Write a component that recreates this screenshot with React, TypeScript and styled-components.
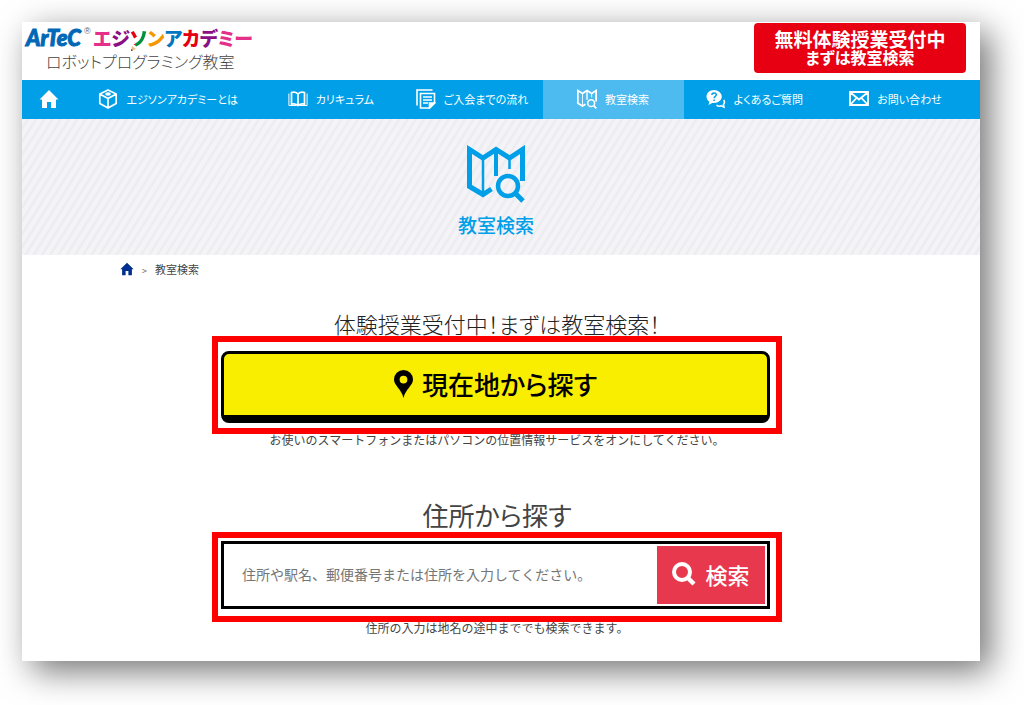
import React from "react";
import styled, { createGlobalStyle } from "styled-components";

const sans = `"Noto Sans CJK JP", "Noto Sans", sans-serif`;
const blue = "#009fe8";

const GlobalStyle = createGlobalStyle`
  *, *::before, *::after { box-sizing: border-box; }
  body {
    margin: 0;
    background: #fff;
    color: #444;
    font-family: ${sans};
    font-feature-settings: "palt";
  }
  a { color: inherit; text-decoration: none; }
  h1, h2, p, ol { margin: 0; padding: 0; font-weight: 400; }
  svg { display: block; flex: none; }
`;

const Stage = styled.div`
  padding: 22px 44px 44px 22px;
`;

const Page = styled.div`
  background: #fff;
  box-shadow: 10px 10px 32px rgba(0, 0, 0, 0.55);
`;

const Header = styled.header`
  display: flex;
  justify-content: space-between;
  align-items: flex-start;
  height: 58px;
  padding-right: 14px;
`;

const Brand = styled.a`
  display: block;
  padding: 2px 0 0 4px;
`;

const LogoRow = styled.span`
  display: flex;
  align-items: center;
  height: 28px;
  line-height: 28px;
`;

const Maker = styled.span`
  width: 58px;
  color: #0068b7;
  font-family: Lato, sans-serif;
  font-size: 22px;
  font-weight: 900;
  font-style: italic;
  -webkit-text-stroke: 1px #0068b7;
`;

const Registered = styled.sup`
  width: 9px;
  align-self: flex-start;
  color: #666;
  font-family: "Liberation Sans", sans-serif;
  font-size: 9px;
  line-height: 14px;
`;

const Academy = styled.span`
  font-size: 19px;
  font-weight: 900;
  white-space: nowrap;
`;

const Kana = styled.span<{ $color: string }>`
  color: ${(p) => p.$color};
`;

const PencilKana = styled.span`
  position: relative;
  background: linear-gradient(100deg, #e60012 40%, #00913a 40%);
  background-clip: text;
  color: transparent;
`;

const PencilTip = styled.svg`
  position: absolute;
  left: 1px;
  bottom: 0;
`;

const Tagline = styled.span`
  display: block;
  padding-left: 20px;
  color: #444;
  font-size: 16px;
  font-weight: 300;
  line-height: 18px;
`;

const TrialButton = styled.a`
  display: flex;
  flex-direction: column;
  align-items: center;
  justify-content: center;
  width: 212px;
  height: 50px;
  margin-top: 1px;
  padding-bottom: 2px;
  border-radius: 4px;
  background: #e60012;
  color: #fff;
  font-weight: 700;
`;

const TrialLine = styled.span<{ $size: number }>`
  font-size: ${(p) => p.$size}px;
  line-height: ${(p) => p.$size + 1}px;
`;

const Nav = styled.nav`
  display: grid;
  grid-template-columns: 54fr 184fr repeat(5, 141fr);
  height: 39px;
  padding-right: 14px;
  background: ${blue};
`;

const NavLink = styled.a<{ $active?: boolean }>`
  display: flex;
  align-items: center;
  justify-content: center;
  gap: 8px;
  padding-bottom: 2px;
  background: ${(p) => (p.$active ? "#4dbbef" : "transparent")};
  color: #fff;
  font-size: 11px;
  white-space: nowrap;
`;

const Hero = styled.div`
  display: flex;
  flex-direction: column;
  align-items: center;
  gap: 8px;
  height: 136px;
  padding: 26px 10px 0 0;
  background: repeating-linear-gradient(122deg, #f4f4f8 0 3px, #ebebee 5px, #f4f4f8 7px);
  color: ${blue};
`;

const HeroTitle = styled.h1`
  font-size: 19px;
  font-weight: 500;
  line-height: 28px;
`;

const Main = styled.main`
  padding: 0 8px 27px 0;
`;

const Crumbs = styled.ol`
  display: flex;
  align-items: center;
  gap: 8px;
  height: 28px;
  padding-left: 98px;
  list-style: none;
  font-size: 11px;
`;

const Arrow = styled.span`
  color: #666;
  font-size: 9px;
`;

const Section = styled.section<{ $top: number }>`
  width: 570px;
  max-width: 100%;
  margin: 0 auto;
  padding-top: ${(p) => p.$top}px;
  text-align: center;
`;

const Lead = styled.h2`
  padding-bottom: 2px;
  color: #222;
  font-size: 22px;
  font-weight: 300;
  line-height: 22px;
`;

const Heading = styled.h2`
  padding-bottom: 4px;
  font-size: 26px;
  line-height: 26px;
`;

const Highlight = styled.div`
  padding: 3px 6px 7px 3px;
  border: 6px solid #f00;
`;

const LocateHighlight = styled(Highlight)`
  padding: 9px 6px 5px 3px;
`;

const LocateButton = styled.button`
  display: flex;
  align-items: center;
  justify-content: center;
  gap: 9px;
  width: 100%;
  height: 72px;
  padding: 0 0 2px;
  border: 3px solid #000;
  border-bottom-width: 8px;
  border-radius: 8px;
  background: #faee00;
  color: #000;
  font: 500 26px ${sans};
  font-feature-settings: "palt";
`;

const Note = styled.p`
  font-size: 12px;
  line-height: 12px;
  font-feature-settings: normal;
`;

const SearchForm = styled.form`
  display: flex;
  height: 68px;
  padding: 2px;
  border: 3px solid #000;
`;

const SearchInput = styled.input`
  flex: 1;
  min-width: 0;
  padding: 0 16px 2px;
  border: 0;
  background: none;
  color: #444;
  font: 14px ${sans};
  &::placeholder { color: #757575; opacity: 1; }
`;

const SearchButton = styled.button`
  display: flex;
  align-items: center;
  justify-content: center;
  gap: 9px;
  width: 108px;
  padding: 0 0 2px;
  border: 0;
  background: #e8384d;
  color: #fff;
  font: 500 22px ${sans};
  font-feature-settings: "palt";
`;

const HomeIcon = ({ size, color }: { size: number; color: string }) => (
  <svg width={size} height={size} viewBox="0 0 20 20" fill={color} aria-hidden="true">
    <path d="M10 1 0.5 10.5H3V19h5v-6h4v6h5v-8.500h2.500z" />
  </svg>
);

const CubeIcon = () => (
  <svg width="20" height="20" viewBox="0 0 20 20" fill="none" stroke="#fff" strokeWidth="1.700" strokeLinejoin="round" aria-hidden="true">
    <path d="M10 1 18.200 5v9.500L10 19l-8.200-4.500V5zM1.800 5 10 9.500 18.200 5M10 9.500V19" />
    <ellipse cx="10" cy="5" rx="2" ry="0.800" />
  </svg>
);

const BookIcon = () => (
  <svg width="20" height="16" viewBox="0 0 20 16" fill="none" stroke="#fff" aria-hidden="true">
    <path d="M10 2.800C8 1.200 5.500 1 3.500 1.500v11.700c2-.5 4.500-.2 6.500 1.300 2-1.500 4.500-1.800 6.500-1.300V1.500C14.500 1 12 1.200 10 2.800zM10 2.800v11.700" strokeWidth="1.700" />
    <path d="M.9 2.500v12h7.600M19.100 2.500v12h-7.600" strokeWidth="1" />
  </svg>
);

const DocumentIcon = () => (
  <svg width="20" height="20" viewBox="0 0 20 20" fill="none" stroke="#fff" strokeWidth="1.600" aria-hidden="true">
    <path d="M1 16.500V1h15.500M4.500 4.500h14v9.500L13.500 19h-9zM7 8h9M7 11h9M7 14h5" />
    <path d="M13.500 19v-5h5z" fill="#fff" />
  </svg>
);

const MapSearchIcon = ({ size }: { size: number }) => (
  <svg width={size} height={size} viewBox="0 0 58 58" fill="none" stroke="currentColor" aria-hidden="true">
    <path d="M24.500 44 16 49.500 2.500 41.500V4.500L16 13 29 4.500 42.500 13 55.500 4.500V36" strokeWidth="5" />
    <path d="M29 4V31" strokeWidth="4" />
    <path d="M16 12V50M42.500 12V24" strokeWidth="2.500" />
    <circle cx="41" cy="41" r="10" strokeWidth="4.500" />
    <path d="M48.500 48.500 56 56" strokeWidth="5" />
  </svg>
);

const QuestionIcon = () => (
  <svg width="20" height="20" viewBox="0 0 20 20" aria-hidden="true">
    <path d="M8 1C3.800 1 .5 3.900.5 7.600c0 2.200 1.100 4 2.900 5.200L2.500 16l3.700-2.100c.6.100 1.200.2 1.800.2 4.200 0 7.800-2.900 7.800-6.500S12.200 1 8 1z" fill="#fff" />
    <path d="M5.900 6c0-2.800 4.400-2.700 4.400-.2C10.300 7.400 8.100 7.500 8.100 9.300M8.100 10.500v1.500" fill="none" stroke={blue} strokeWidth="1.500" />
    <path d="M17.700 11c1.200 1.800.8 3.400-.3 4.500l.6 2.600-2.700-1.300c-1.700.6-3.600.2-4.800-.7" fill="none" stroke="#fff" strokeWidth="1.500" />
  </svg>
);

const MailIcon = () => (
  <svg width="20" height="15" viewBox="0 0 20 15" fill="none" stroke="#fff" strokeWidth="1.800" aria-hidden="true">
    <path d="M1 1h18v13H1zM2 2l8 6.500L18 2M2 13l5.500-6M18 13l-5.500-6" />
  </svg>
);

const PinIcon = () => (
  <svg width="19" height="28" viewBox="0 0 19 28" aria-hidden="true">
    <path fillRule="evenodd" d="M9.500 0A9.500 9.500 0 0 0 0 9.500C0 15.500 7.500 19 9.500 28 11.500 19 19 15.500 19 9.500A9.500 9.500 0 0 0 9.500 0zm0 5.700a3.900 3.900 0 1 1 0 7.800 3.900 3.900 0 0 1 0-7.800z" fill="#000" />
  </svg>
);

const SearchIcon = () => (
  <svg width="24" height="24" viewBox="0 0 24 24" fill="none" stroke="#fff" aria-hidden="true">
    <circle cx="10" cy="10" r="8" strokeWidth="4" />
    <path d="m16 16 6 6" strokeWidth="4.500" />
  </svg>
);

const navItems = [
  { label: "エジソンアカデミーとは", icon: <CubeIcon /> },
  { label: "カリキュラム", icon: <BookIcon /> },
  { label: "ご入会までの流れ", icon: <DocumentIcon /> },
  { label: "教室検索", icon: <MapSearchIcon size={20} />, active: true },
  { label: "よくあるご質問", icon: <QuestionIcon /> },
  { label: "お問い合わせ", icon: <MailIcon /> },
];

export default function App() {
  return (
    <Stage lang="ja">
      <GlobalStyle />
      <Page>
        <Header>
          <Brand href="#">
            <LogoRow>
              <Maker>ArTeC</Maker>
              <Registered>®</Registered>
              <Academy>
                <Kana $color="#e5308a">エ</Kana>
                <Kana $color="#8a0f86">ジ</Kana>
                <PencilKana>
                  ソ
                  <PencilTip width="5" height="5" viewBox="0 0 5 5" aria-hidden="true">
                    <path d="M0 5 1 0l4 3z" fill="#f0c080" />
                    <path d="M0 5 .4 3l1.600 1.200z" fill="#333" />
                  </PencilTip>
                </PencilKana>
                <Kana $color="#f39800">ン</Kana>
                <Kana $color="#0075c2">ア</Kana>
                <Kana $color="#e60012">カ</Kana>
                <Kana $color="#8a0f86">デ</Kana>
                <Kana $color="#e5308a">ミー</Kana>
              </Academy>
            </LogoRow>
            <Tagline>ロボットプログラミング教室</Tagline>
          </Brand>
          <TrialButton href="#">
            <TrialLine $size={19}>無料体験授業受付中</TrialLine>
            <TrialLine $size={16}>まずは教室検索</TrialLine>
          </TrialButton>
        </Header>
        <Nav>
          <NavLink href="#" aria-label="ホーム">
            <HomeIcon size={20} color="#fff" />
          </NavLink>
          {navItems.map((item) => (
            <NavLink key={item.label} href="#" $active={item.active}>
              {item.icon}
              {item.label}
            </NavLink>
          ))}
        </Nav>
        <Hero>
          <MapSearchIcon size={58} />
          <HeroTitle>教室検索</HeroTitle>
        </Hero>
        <Main>
          <Crumbs>
            <li><a href="#" aria-label="ホーム"><HomeIcon size={14} color="#00308f" /></a></li>
            <li><Arrow>&gt;</Arrow></li>
            <li>教室検索</li>
          </Crumbs>
          <Section $top={29}>
            <Lead>体験授業受付中！まずは教室検索！</Lead>
            <LocateHighlight>
              <LocateButton type="button">
                <PinIcon />
                現在地から探す
              </LocateButton>
            </LocateHighlight>
            <Note>お使いのスマートフォンまたはパソコンの位置情報サービスをオンにしてください。</Note>
          </Section>
          <Section $top={56}>
            <Heading>住所から探す</Heading>
            <Highlight>
              <SearchForm onSubmit={(e) => e.preventDefault()}>
                <SearchInput
                  type="text"
                  aria-label="住所"
                  placeholder="住所や駅名、郵便番号または住所を入力してください。"
                />
                <SearchButton type="submit">
                  <SearchIcon />
                  検索
                </SearchButton>
              </SearchForm>
            </Highlight>
            <Note>住所の入力は地名の途中まででも検索できます。</Note>
          </Section>
        </Main>
      </Page>
    </Stage>
  );
}
